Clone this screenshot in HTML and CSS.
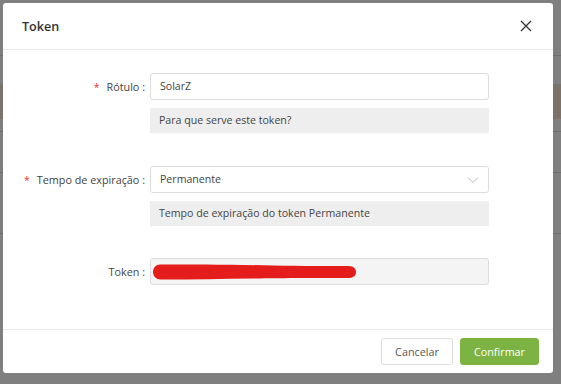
FILE: index.html
```html
<!DOCTYPE html>
<html>
<head>
<meta charset="utf-8">
<link rel="stylesheet" href="styles.css">
</head>
<body>
<div class="page">
  <div class="bg-line l1"></div>
  <div class="bg-band"></div>
  <div class="bg-line l2"></div>
  <div class="bg-line l3"></div>
  <div class="bg-line l4"></div>
</div>
<div class="mask"></div>
<div class="modal">
  <div class="modal-header">
    <div class="title">Token</div>
    <svg class="close" width="12" height="12" viewBox="0 0 12 12"><path d="M1 1L11 11M11 1L1 11" stroke="#333" stroke-width="1.3" fill="none"/></svg>
  </div>
  <div class="modal-body">
    <div class="row">
      <div class="label"><span class="req">*</span>Rótulo :</div>
      <div class="ctrl">
        <div class="input">SolarZ</div>
        <div class="hint">Para que serve este token?</div>
      </div>
    </div>
    <div class="row row2">
      <div class="label"><span class="req">*</span>Tempo de expiração :</div>
      <div class="ctrl">
        <div class="input select">Permanente
          <svg class="arrow" width="12" height="8" viewBox="0 0 12 8"><path d="M1 1.5L6 6.5L11 1.5" stroke="#bbb" stroke-width="1" fill="none"/></svg>
        </div>
        <div class="hint">Tempo de expiração do token Permanente</div>
      </div>
    </div>
    <div class="row row3">
      <div class="label">Token :</div>
      <div class="ctrl">
        <div class="input disabled">
          <svg class="scribble" width="203" height="16" viewBox="0 0 203 16"><path d="M7 0.5 C40 0.5 80 0.5 120 1.5 C150 2 175 2 195 2 C201 2 203 5 203 8 C203 12 200 14 194 14 C170 14 130 14 100 14.5 C70 15 40 15.5 8 15.5 C3 15.5 0 12 0 8 C0 4 3 0.5 7 0.5 Z" fill="#e51c1c"/></svg>
        </div>
      </div>
    </div>
  </div>
  <div class="modal-footer">
    <button class="btn cancel">Cancelar</button>
    <button class="btn primary">Confirmar</button>
  </div>
</div>
</body>
</html>
```
FILE: styles.css
```css
* { box-sizing: border-box; }
html, body { margin: 0; padding: 0; }
body {
  width: 561px;
  height: 384px;
  overflow: hidden;
  font-family: "Open Sans", "Noto Sans", sans-serif;
  font-size: 10.4px;
  color: #444;
  position: relative;
  background: #fff;
}
.page {
  width: 561px;
  height: 384px;
  background: #fff;
  padding-top: 55px;
}
.bg-line { height: 1px; background: #ddd; }
.bg-band { margin-top: 28px; height: 35px; background: #f7e7d5; }
.l2 { margin-top: 12px; }
.l3 { margin-top: 40px; }
.l4 { margin-top: 60px; }
.mask {
  position: absolute;
  inset: 0;
  background: rgba(0,0,0,0.5);
}
.modal {
  position: absolute;
  left: 3px;
  top: 3px;
  width: 550px;
  height: 370px;
  background: #fff;
  border-radius: 3px;
  display: flex;
  flex-direction: column;
}
.modal-header {
  height: 47px;
  border-bottom: 1px solid #e8e8e8;
  display: flex;
  align-items: center;
  justify-content: space-between;
  padding: 0 21px 0 19px;
}
.title {
  font-size: 12.6px;
  font-weight: 600;
  color: #333;
}
.close { display: block; }
.modal-body {
  flex: 1;
  padding-top: 23px;
}
.row {
  display: flex;
  align-items: flex-start;
}
.row2 { margin-top: 33px; }
.row3 { margin-top: 32px; }
.label {
  width: 147px;
  text-align: right;
  padding-right: 5px;
  line-height: 27px;
  font-size: 10.8px;
  color: #444;
  white-space: nowrap;
}
.req {
  color: #e53935;
  margin-right: 7px;
  font-size: 10.5px;
}
.ctrl { width: 339px; }
.input {
  height: 27px;
  border: 1px solid #ddd;
  border-radius: 3px;
  padding: 0 9px;
  line-height: 25px;
  font-size: 10.6px;
  color: #444;
  position: relative;
}
.select { display: flex; justify-content: space-between; align-items: center; }
.arrow { display: block; }
.disabled {
  background: #f4f4f4;
  padding: 0 2px;
  display: flex;
  align-items: center;
}
.scribble { display: block; margin-top: 1px; }
.hint {
  margin-top: 8px;
  height: 25px;
  background: #eeeeee;
  padding: 0 9px;
  line-height: 25px;
  font-size: 10.6px;
  color: #444;
}
.modal-footer {
  height: 44px;
  border-top: 1px solid #e8e8e8;
  display: flex;
  justify-content: flex-end;
  align-items: center;
  gap: 7px;
  padding-right: 14px;
}
.btn {
  height: 27px;
  border: 1px solid #ddd;
  border-radius: 3px;
  background: #fff;
  color: #555;
  font-family: inherit;
  font-size: 10.8px;
  padding: 0;
  text-align: center;
}
.cancel { width: 72px; }
.btn.primary {
  width: 79px;
  background: #7cb342;
  border-color: #7cb342;
  color: #fff;
}
```
